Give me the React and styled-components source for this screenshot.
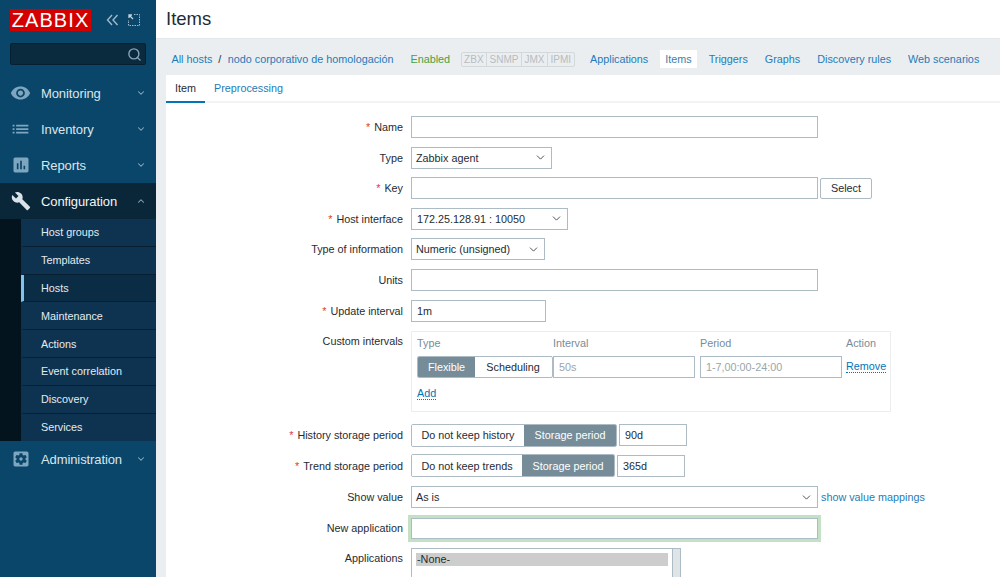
import React from "react";
import styled, { createGlobalStyle } from "styled-components";
import { ChevronDown, ChevronUp, Search } from "lucide-react";

const Global = createGlobalStyle`
  html, body { margin: 0; padding: 0; height: 577px; overflow: hidden; background: #ebeef0; }
  body { font-family: "Liberation Sans", Arial, sans-serif; font-size: 10.8px; color: #1f2c33; }
  * { box-sizing: border-box; }
`;

const Page = styled.div`display: flex; width: 1000px; height: 577px; overflow: hidden;`;
const Side = styled.aside`width: 156px; flex: none; background: #0a466a; display: flex; flex-direction: column;`;
const LogoRow = styled.div`display: flex; align-items: center; padding: 9px 0 0 10px; height: 31px; color: #9fb9c9;`;
const Logo = styled.div`
  width: 81px; height: 22px; background: #d40000; color: #fff; font-size: 20px; line-height: 22px;
  text-align: center; letter-spacing: 1.1px; font-weight: 400;
`;
const LogoTools = styled.div`display: flex; align-items: center; gap: 9px; margin-left: 15px;`;
const SearchBox = styled.div`
  margin: 12px 10px 10px; height: 22px; background: #0a2a3e; border: 1px solid #062032; border-radius: 2px;
  display: flex; justify-content: flex-end; align-items: center; padding-right: 3px; color: #8ba5b5;
`;
const MenuItem = styled.div`
  height: 36px; display: flex; align-items: center; font-size: 13px; padding-left: 10px;
  color: ${p => (p.$open ? "#f2f5f7" : "#dbe5eb")};
  background: ${p => (p.$open ? "#0a2639" : "transparent")};
`;
const IconSlot = styled.span`width: 21px; height: 20px; display: flex; align-items: center; justify-content: center; margin-right: 10px; color: ${p => (p.$open ? "#d8e2e8" : "#7ea6bf")};`;
const MenuLabel = styled.span`flex: 1; letter-spacing: -0.1px;`;
const Caret = styled.span`width: 30px; display: flex; justify-content: center; color: #8fb0c4; padding-right: 1px;`;
const SubWrap = styled.div`background: #03141f; padding-left: 21px;`;
const SubItem = styled.div`
  height: 27.8px; background: ${p => (p.$active ? "#0a2c44" : "#0d3350")};
  border-bottom: 1px solid #071f30; border-left: 3px solid ${p => (p.$active ? "#7fc4ee" : "transparent")};
  display: flex; align-items: center; padding-left: 17px; font-size: 10.8px; color: #e4ebef;
  &:last-child { border-bottom: 0; }
`;

const Main = styled.main`flex: 1; min-width: 0; display: flex; flex-direction: column;`;
const Header = styled.header`height: 39px; background: #fff; border-bottom: 1px solid #e3e7ea; padding-left: 10px; display: flex; align-items: center;`;
const Title = styled.h1`margin: 0; font-size: 18.5px; font-weight: 400; color: #1f2c33;`;
const Crumbs = styled.nav`height: 36px; padding: 4px 0 0 15.5px; display: flex; align-items: center; white-space: nowrap;`;
const Link = styled.a`color: #1f7bb8; text-decoration: none;`;
const Sep = styled.span`margin: 0 6.5px 0 6px; color: #1f2c33;`;
const Enabled = styled.span`color: #44a244; margin-left: 17px;`;
const Badges = styled.div`display: flex; margin: 0 10px 0 10.5px; border: 1px solid #d3d8db; border-radius: 2px; height: 15px;`;
const Badge = styled.span`
  padding: 0 2.5px; color: #b6bcc0; line-height: 13px; font-size: 10px;
  border-right: 1px solid #d3d8db; &:last-child { border-right: 0; }
`;
const NavLink = styled(Link)`
  padding: 0 5.5px; height: 18px; line-height: 18px; margin-right: 6px;
  background: ${p => (p.$active ? "#fff" : "transparent")};
  color: ${p => (p.$active ? "#3e7ea8" : "#1f7bb8")};
`;
const Panel = styled.section`margin-left: 10px; flex: 1; background: #fff; min-height: 0; overflow: hidden;`;
const Tabs = styled.div`display: flex; height: 28px; border-bottom: 2px solid #f1f3f4;`;
const Tab = styled.a`
  height: 28px; padding: 0 8px 0 ${p => (p.$active ? "9px" : "8px")}; line-height: 27px; margin-right: 1px; width: ${p => (p.$active ? "39px" : "auto")};
  color: ${p => (p.$active ? "#1f2c33" : "#1f7bb8")};
  border-bottom: 2px solid ${p => (p.$active ? "#0275b8" : "transparent")};
`;
const Form = styled.form`padding-top: 13px; display: flex; flex-direction: column; gap: 8.6px;`;
const Row = styled.div`
  display: grid; grid-template-columns: 237px 1fr; column-gap: 8px; min-height: 22px;
  align-items: ${p => (p.$top ? "start" : "center")};
  margin-top: ${p => p.$mt || 0}px;
`;
const Label = styled.label`text-align: right; color: #1f2c33; white-space: nowrap; padding-top: ${p => (p.$top ? "4px" : 0)};
  b { color: #e33734; font-weight: 400; margin-right: 4px; }
`;
const Field = styled.div`display: flex; align-items: center; height: 22px;`;
const TextInput = styled.input`
  width: ${p => p.$w}px; height: ${p => p.$h || 22}px; border: 1px solid #acbbc4; background: #fff; padding: 0 5px; font: 10.8px "Liberation Sans", Arial, sans-serif;
  color: ${p => (p.$muted ? "#9aa5ab" : "#1f2c33")}; outline: 0; border-radius: 0;
  margin-left: ${p => p.$ml || 0}px;
`;
const SelectBox = styled.div`
  width: ${p => p.$w}px; height: 22px; border: 1px solid #acbbc4; background: #fff; padding: 0 4px 0 ${p => p.$pl || 3}px;
  display: flex; align-items: center; justify-content: space-between; color: #1f2c33;
  svg { color: #45525a; }
`;
const Btn = styled.button`
  margin-left: 2px; width: 52px; height: 21px; background: #fff; border: 1px solid #acbbc4; border-radius: 2px;
  font: 10.8px "Liberation Sans", Arial, sans-serif; color: #1f2c33; padding: 0;
`;
const Seg = styled.div`display: flex; height: ${p => p.$h || 23}px; border: 1px solid #acbbc4; border-radius: 2px; overflow: hidden;`;
const SegItem = styled.span`
  width: ${p => p.$w}px; display: flex; align-items: center; justify-content: center;
  background: ${p => (p.$on ? "#768d99" : "#fff")}; color: ${p => (p.$on ? "#fff" : "#1f2c33")};
`;
const Intervals = styled.div`
  width: 480px; height: 81px; border: 1px solid #ebeef0; padding: 4px 5px 0 5px;
  display: grid; grid-template-columns: 136px 147px 146px auto; grid-template-rows: 14px 33px 20px; align-items: center;
`;
const Head = styled.span`color: #768d99;`;
const DotLink = styled.a`color: #0275b8; border-bottom: 1px dotted #0275b8; justify-self: start; line-height: 12px;`;
const GreenBox = styled.div`padding: 3px; margin: -1px 0 -3px -3px; background: #c5e1c5; height: 27px; width: 413px; display: flex;`;
const ValueLink = styled(Link)`margin-left: 3px;`;
const List = styled.div`width: 270px; height: 120px; border: 1px solid #acbbc4; padding: 4px; position: relative; overflow: hidden;`;
const ListRow = styled.div`width: 252px; height: 13px; background: #cdcdcd; line-height: 13px; padding-left: 1px;`;
const Scroll = styled.span`position: absolute; top: 0; right: 0; width: 8px; height: 100%; background: #dfe4e7; border-left: 1px solid #acbbc4;`;

const Mat = ({ d, size = 22 }) => (
  <svg width={size} height={size} viewBox="0 0 24 24" fill="currentColor"><path d={d} /></svg>
);
const eye = "M12 4.5C7 4.5 2.73 7.61 1 12c1.73 4.39 6 7.5 11 7.5s9.27-3.11 11-7.5c-1.73-4.39-6-7.5-11-7.5zM12 17c-2.76 0-5-2.24-5-5s2.24-5 5-5 5 2.24 5 5-2.24 5-5 5zm0-8c-1.66 0-3 1.34-3 3s1.34 3 3 3 3-1.34 3-3-1.34-3-3-3z";
const list = "M3 7h2.2v2H3zM7 7h14v2H7zM3 11h2.2v2H3zM7 11h14v2H7zM3 15h2.2v2H3zM7 15h14v2H7z";
const report = "M19 3H5c-1.1 0-2 .9-2 2v14c0 1.1.9 2 2 2h14c1.1 0 2-.9 2-2V5c0-1.1-.9-2-2-2zM9 17H7v-7h2v7zm4 0h-2V7h2v10zm4 0h-2v-4h2v4z";
const wrench = "M22.7 19l-9.1-9.1c.9-2.3.4-5-1.5-6.9-2-2-5-2.4-7.4-1.3L9 6 6 9 1.6 4.7C.4 7.1.9 10.1 2.9 12.1c1.9 1.9 4.6 2.4 6.9 1.5l9.1 9.1c.4.4 1 .4 1.4 0l2.3-2.3c.5-.4.5-1.1.1-1.4z";
const gear = "M12 10c-1.1 0-2 .9-2 2s.9 2 2 2 2-.9 2-2-.9-2-2-2zm7-7H5c-1.11 0-2 .9-2 2v14c0 1.1.89 2 2 2h14c1.11 0 2-.9 2-2V5c0-1.1-.89-2-2-2zm-1.75 9c0 .23-.02.46-.05.68l1.48 1.16c.13.11.17.3.08.45l-1.4 2.42c-.09.15-.27.21-.43.15l-1.74-.7c-.36.28-.76.51-1.18.69l-.26 1.85c-.03.17-.18.3-.35.3h-2.8c-.17 0-.32-.13-.35-.29l-.26-1.85c-.43-.18-.82-.41-1.18-.69l-1.74.7c-.16.06-.34 0-.43-.15l-1.4-2.42c-.09-.15-.05-.34.08-.45l1.48-1.16c-.03-.23-.05-.46-.05-.69 0-.23.02-.46.05-.68l-1.48-1.16c-.13-.11-.17-.3-.08-.45l1.4-2.42c.09-.15.27-.21.43-.15l1.74.7c.36-.28.76-.51 1.18-.69l.26-1.85c.03-.17.18-.3.35-.3h2.8c.17 0 .32.13.35.29l.26 1.85c.43.18.82.41 1.18.69l1.74-.7c.16-.06.34 0 .43.15l1.4 2.42c.09.15.05.34-.08.45l-1.48 1.16c.03.23.05.46.05.69z";

const Item = ({ icon, label, open }) => (
  <MenuItem $open={open}>
    <IconSlot $open={open}><Mat d={icon} size={icon === eye ? 24 : icon === list ? 22 : 20} /></IconSlot>
    <MenuLabel>{label}</MenuLabel>
    <Caret>{open ? <ChevronUp size={10} strokeWidth={2.5} /> : <ChevronDown size={10} strokeWidth={2.5} />}</Caret>
  </MenuItem>
);

const Select = ({ w, pl, children }) => (
  <SelectBox $w={w} $pl={pl}>{children}<ChevronDown size={13} strokeWidth={1.8} /></SelectBox>
);

const subs = ["Host groups", "Templates", "Hosts", "Maintenance", "Actions", "Event correlation", "Discovery", "Services"];
const navs = ["Applications", "Items", "Triggers", "Graphs", "Discovery rules", "Web scenarios"];

export default function App() {
  return (
    <Page>
      <Global />
      <Side>
        <LogoRow>
          <Logo>ZABBIX</Logo>
          <LogoTools>
            <svg width="13" height="12" viewBox="0 0 13 12" fill="none" stroke="currentColor" strokeWidth="1.4"><path d="M6 1 1.5 6 6 11M11.5 1 7 6l4.5 5" /></svg>
            <svg width="12" height="12" viewBox="0 0 12 12" fill="none" stroke="currentColor" strokeWidth="1"><path d="M6 .5h5.5v11H.5V6" strokeDasharray="1.5 1" /><path d="M1 1l4 4M1 4V1h3" strokeWidth="1.3" stroke="#c4d4de" /></svg>
          </LogoTools>
        </LogoRow>
        <SearchBox><Search size={15} strokeWidth={2.2} /></SearchBox>
        <Item icon={eye} label="Monitoring" />
        <Item icon={list} label="Inventory" />
        <Item icon={report} label="Reports" />
        <Item icon={wrench} label="Configuration" open />
        <SubWrap>
          {subs.map(s => <SubItem key={s} $active={s === "Hosts"}>{s}</SubItem>)}
        </SubWrap>
        <Item icon={gear} label="Administration" />
      </Side>
      <Main>
        <Header><Title>Items</Title></Header>
        <Crumbs>
          <Link>All hosts</Link><Sep>/</Sep><Link>nodo corporativo de homologación</Link>
          <Enabled>Enabled</Enabled>
          <Badges>{["ZBX", "SNMP", "JMX", "IPMI"].map(b => <Badge key={b}>{b}</Badge>)}</Badges>
          {navs.map(n => <NavLink key={n} $active={n === "Items"}>{n}</NavLink>)}
        </Crumbs>
        <Panel>
          <Tabs><Tab $active>Item</Tab><Tab>Preprocessing</Tab></Tabs>
          <Form>
            <Row><Label><b>*</b>Name</Label><Field><TextInput $w={407} readOnly /></Field></Row>
            <Row><Label>Type</Label><Field><Select w={141} pl={4}>Zabbix agent</Select></Field></Row>
            <Row><Label><b>*</b>Key</Label><Field><TextInput $w={407} readOnly /><Btn type="button">Select</Btn></Field></Row>
            <Row><Label><b>*</b>Host interface</Label><Field><Select w={157} pl={5}>172.25.128.91 : 10050</Select></Field></Row>
            <Row><Label>Type of information</Label><Field><Select w={134} pl={4}>Numeric (unsigned)</Select></Field></Row>
            <Row><Label>Units</Label><Field><TextInput $w={407} readOnly /></Field></Row>
            <Row><Label><b>*</b>Update interval</Label><Field><TextInput $w={135} value="1m" readOnly /></Field></Row>
            <Row $top $mt={1}>
              <Label $top>Custom intervals</Label>
              <Intervals>
                <Head>Type</Head><Head>Interval</Head><Head>Period</Head><Head>Action</Head>
                <Seg $h={22}><SegItem $w={57} $on>Flexible</SegItem><SegItem $w={76}>Scheduling</SegItem></Seg>
                <TextInput $w={142} value="50s" $muted readOnly />
                <TextInput $w={142} value="1-7,00:00-24:00" $muted readOnly />
                <DotLink>Remove</DotLink>
                <DotLink>Add</DotLink>
              </Intervals>
            </Row>
            <Row $mt={3.4}>
              <Label><b>*</b>History storage period</Label>
              <Field><Seg><SegItem $w={112}>Do not keep history</SegItem><SegItem $w={92} $on>Storage period</SegItem></Seg><TextInput $w={68} $ml={2} value="90d" readOnly /></Field>
            </Row>
            <Row>
              <Label><b>*</b>Trend storage period</Label>
              <Field><Seg><SegItem $w={110}>Do not keep trends</SegItem><SegItem $w={92} $on>Storage period</SegItem></Seg><TextInput $w={68} $ml={2} value="365d" readOnly /></Field>
            </Row>
            <Row $mt={1}>
              <Label>Show value</Label>
              <Field><Select w={407} pl={4}>As is</Select><ValueLink>show value mappings</ValueLink></Field>
            </Row>
            <Row>
              <Label>New application</Label>
              <Field><GreenBox><TextInput $w={407} $h={21} readOnly /></GreenBox></Field>
            </Row>
            <Row $top>
              <Label $top>Applications</Label>
              <List><ListRow>-None-</ListRow><Scroll /></List>
            </Row>
          </Form>
        </Panel>
      </Main>
    </Page>
  );
}
